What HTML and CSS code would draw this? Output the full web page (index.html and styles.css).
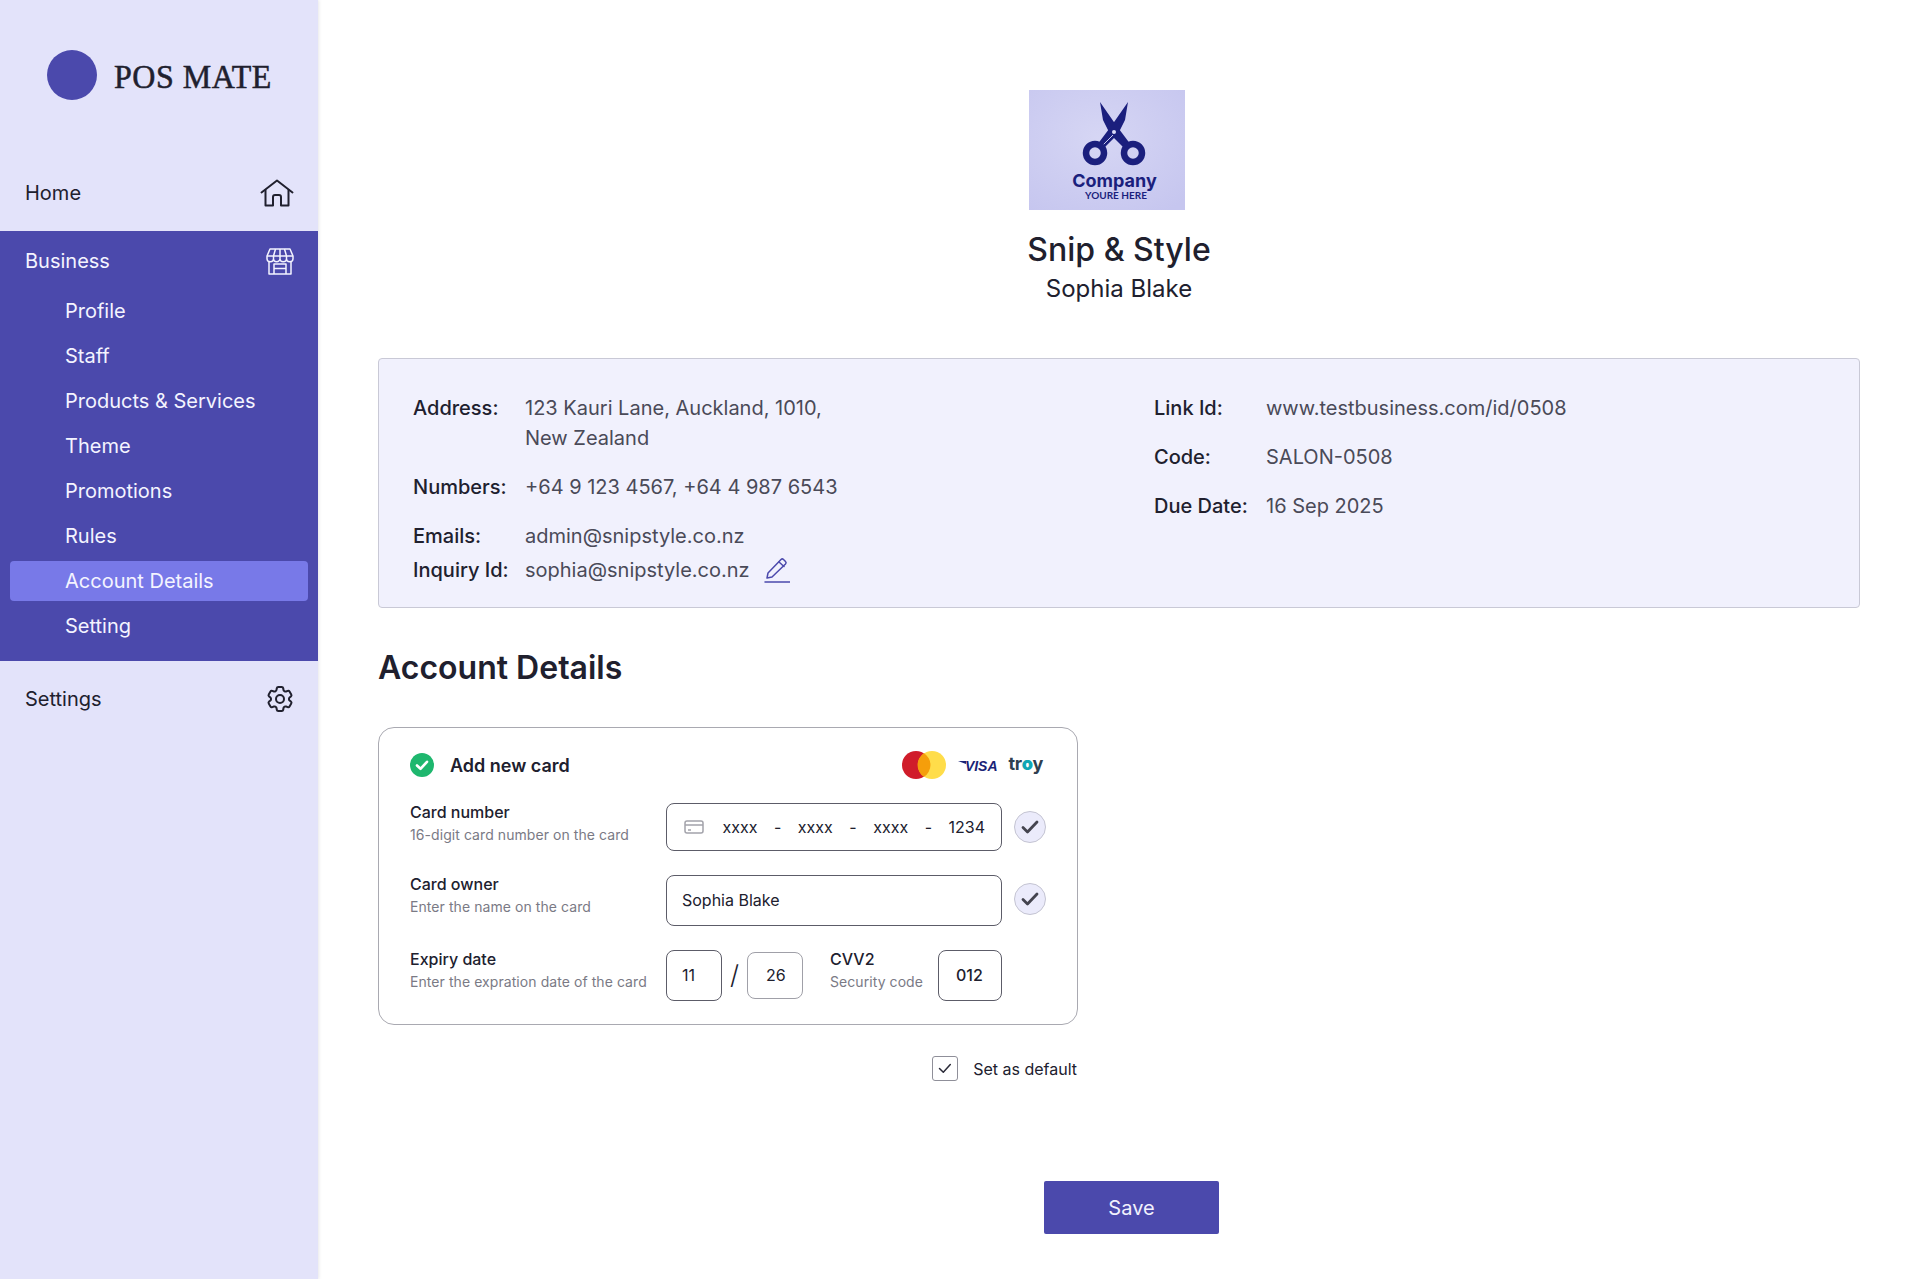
FILE: index.html
```html
<!DOCTYPE html>
<html lang="en">

<head>
  <meta charset="UTF-8">
  <meta name="viewport" content="width=device-width, initial-scale=1.0">
  <title>POS Mate - Account Details</title>

  <link rel="stylesheet" href="styles.css">
</head>

<body>
  <div class="app">
    <aside class="sidebar">
      <div class="brand">
        <span class="brand-dot"></span>
        <span class="brand-name">POS MATE</span>
      </div>

      <nav>
        <a class="nav-row">
          <span>Home</span>
          <svg class="nav-icon" width="34" height="28" viewBox="0 0 34 28" fill="none" stroke="currentColor" stroke-width="2" stroke-linejoin="round" stroke-linecap="round">
            <path d="M1.5 13.5 17 1.5l15.500 12" />
            <path d="M5.500 11v15.500h7.500v-8.500a2 2 0 0 1 2-2h4a2 2 0 0 1 2 2v8.500h7.500V11" />
          </svg>
        </a>

        <div class="nav-group">
          <a class="nav-row nav-row-group">
            <span>Business</span>
            <svg class="nav-icon" width="28" height="27" viewBox="0 0 28 27" fill="none" stroke="currentColor" stroke-width="1.500" stroke-linejoin="round">
              <path d="M4 1h20l3 7v2.500a3.200 3.200 0 0 1-6.500 0 3.200 3.200 0 0 1-6.500 0 3.200 3.200 0 0 1-6.500 0 3.200 3.200 0 0 1-6.500 0V8z" />
              <path d="M1 8h26M7.500 10V8l2-7M14 10V1M20.500 10V8l-2-7" />
              <path d="M3 13v13h22V13" />
              <path d="M8 26V16h12v10M8 20.500h12" />
            </svg>
          </a>
          <a class="sub-item">Profile</a>
          <a class="sub-item">Staff</a>
          <a class="sub-item">Products &amp; Services</a>
          <a class="sub-item">Theme</a>
          <a class="sub-item">Promotions</a>
          <a class="sub-item">Rules</a>
          <a class="sub-item sub-item-active">Account Details</a>
          <a class="sub-item">Setting</a>
        </div>

        <a class="nav-row">
          <span>Settings</span>
          <svg class="nav-icon nav-icon-gear" width="32" height="32" viewBox="0 0 24 24" fill="none" stroke="currentColor" stroke-width="1.500" stroke-linejoin="round" stroke-linecap="round">
            <path d="M9.594 3.940c.09-.542.56-.94 1.110-.94h2.593c.55 0 1.020.398 1.110.94l.213 1.281c.063.374.313.686.645.870.074.04.147.083.22.127.325.196.72.257 1.075.124l1.217-.456a1.125 1.125 0 0 1 1.370.49l1.296 2.247a1.125 1.125 0 0 1-.26 1.431l-1.003.827c-.293.241-.438.613-.43.992a7.723 7.723 0 0 1 0 .255c-.008.378.137.75.43.991l1.004.827c.424.35.534.955.26 1.430l-1.298 2.247a1.125 1.125 0 0 1-1.369.491l-1.217-.456c-.355-.133-.75-.072-1.076.124a6.470 6.470 0 0 1-.22.128c-.331.183-.581.495-.644.869l-.213 1.281c-.09.543-.56.94-1.110.94h-2.594c-.55 0-1.019-.398-1.110-.94l-.213-1.281c-.062-.374-.312-.686-.644-.87a6.520 6.520 0 0 1-.22-.127c-.325-.196-.72-.257-1.076-.124l-1.217.456a1.125 1.125 0 0 1-1.369-.49l-1.297-2.247a1.125 1.125 0 0 1 .26-1.431l1.004-.827c.292-.24.437-.613.43-.991a6.932 6.932 0 0 1 0-.255c.007-.38-.138-.751-.43-.992l-1.004-.827a1.125 1.125 0 0 1-.26-1.430l1.297-2.247a1.125 1.125 0 0 1 1.370-.491l1.216.456c.356.133.751.072 1.076-.124.072-.044.146-.086.22-.128.332-.183.582-.495.644-.869l.214-1.280Z" />
            <path d="M15 12a3 3 0 1 1-6 0 3 3 0 0 1 6 0Z" />
          </svg>
        </a>
      </nav>
    </aside>

    <main>
      <header class="business-head">
        <svg class="company-logo" width="156" height="120" viewBox="0 0 156 120">
          <defs>
            <radialGradient id="logo-bg" cx="45%" cy="40%" r="75%">
              <stop offset="0" stop-color="#d6d6f4" />
              <stop offset="1" stop-color="#c6c6ef" />
            </radialGradient>
          </defs>
          <rect width="156" height="120" fill="url(#logo-bg)" />
          <g fill="#1b1f7d">
            <path d="M71 12 87 35l15 20-5 5-16-16-7-14z" />
            <path d="M99 12 83 35 68 55l5 5 16-16 7-14z" />
          </g>
          <path d="M84 45 72 57" stroke="#c9c9f0" stroke-width="1" />
          <circle cx="85" cy="42" r="2" fill="#dcdcf7" />
          <g fill="none" stroke="#1b1f7d" stroke-width="6.500">
            <circle cx="66" cy="63" r="9" />
            <circle cx="104" cy="63" r="9" />
          </g>
          <text class="logo-company" x="85.500" y="97" text-anchor="middle">Company</text>
          <text class="logo-tag" x="87" y="109" text-anchor="middle">YOURE HERE</text>
        </svg>
        <h1>Snip &amp; Style</h1>
        <p class="owner">Sophia Blake</p>
      </header>

      <section class="info-panel">
        <dl class="info-col">
          <div class="info-row">
            <dt>Address:</dt>
            <dd>123 Kauri Lane, Auckland, 1010,<br>New Zealand</dd>
          </div>
          <div class="info-row">
            <dt>Numbers:</dt>
            <dd>+64 9 123 4567, +64 4 987 6543</dd>
          </div>
          <div class="info-row">
            <dt>Emails:</dt>
            <dd>admin@snipstyle.co.nz</dd>
          </div>
          <div class="info-row info-row-tight">
            <dt>Inquiry Id:</dt>
            <dd class="with-icon">
              sophia@snipstyle.co.nz
              <svg width="26" height="26" viewBox="0 0 26 26" fill="none" stroke="#4b49ac" stroke-width="1.500" stroke-linejoin="round" stroke-linecap="round">
                <path d="M1 25h25" />
                <path d="M3 21l1-5L17 2.500a1.800 1.800 0 0 1 2.500 0l2 2a1.800 1.800 0 0 1 0 2.500L8 20z" />
                <path d="M15 5l5 4.500" />
              </svg>
            </dd>
          </div>
        </dl>
        <dl class="info-col">
          <div class="info-row">
            <dt>Link Id:</dt>
            <dd>www.testbusiness.com/id/0508</dd>
          </div>
          <div class="info-row">
            <dt>Code:</dt>
            <dd>SALON-0508</dd>
          </div>
          <div class="info-row">
            <dt>Due Date:</dt>
            <dd>16 Sep 2025</dd>
          </div>
        </dl>
      </section>

      <h2>Account Details</h2>

      <form class="card-form">
        <div class="card-head">
          <div class="card-title">
            <svg width="24" height="24" viewBox="0 0 24 24">
              <circle cx="12" cy="12" r="12" fill="#1eb76e" />
              <path d="M7 12.500l3.500 3.300L17 8.800" fill="none" stroke="#fff" stroke-width="2.600" stroke-linecap="round" stroke-linejoin="round" />
            </svg>
            <span>Add new card</span>
          </div>
          <div class="brands">
            <svg class="mastercard" width="44" height="28" viewBox="0 0 44 28">
              <circle cx="14" cy="14" r="14" fill="#d01c2a" />
              <circle cx="30" cy="14" r="14" fill="#ffdd4a" />
              <path d="M22 2.200a14 14 0 0 1 0 23.600 14 14 0 0 1 0-23.600z" fill="#f59e0b" />
            </svg>
            <span class="visa"><i class="visa-wing"></i>VISA</span>
            <span class="troy">tr<b>o</b>y</span>
          </div>
        </div>

        <div class="form-row">
          <div class="field-text">
            <label>Card number</label>
            <small>16-digit card number on the card</small>
          </div>
          <div class="input input-number">
            <svg width="20" height="14" viewBox="0 0 20 14" fill="none" stroke="#a3a3ab" stroke-width="1.500">
              <rect x="1" y="1" width="18" height="12" rx="2" />
              <path d="M1 5h18M4 10h3" />
            </svg>
            <span>xxxx</span><span>-</span><span>xxxx</span><span>-</span><span>xxxx</span><span>-</span><span>1234</span>
          </div>
          <span class="ok-badge">
            <svg width="18" height="14" viewBox="0 0 18 14"><path d="M2 7.500l4.500 4.500L16 2" fill="none" stroke="#44444f" stroke-width="2.800" stroke-linecap="round" stroke-linejoin="round" /></svg>
          </span>
        </div>

        <div class="form-row">
          <div class="field-text">
            <label>Card owner</label>
            <small>Enter the name on the card</small>
          </div>
          <div class="input input-owner">Sophia Blake</div>
          <span class="ok-badge">
            <svg width="18" height="14" viewBox="0 0 18 14"><path d="M2 7.500l4.500 4.500L16 2" fill="none" stroke="#44444f" stroke-width="2.800" stroke-linecap="round" stroke-linejoin="round" /></svg>
          </span>
        </div>

        <div class="form-row">
          <div class="field-text">
            <label>Expiry date</label>
            <small>Enter the expration date of the card</small>
          </div>
          <div class="input input-month">11</div>
          <span class="date-slash">/</span>
          <div class="input input-year">26</div>
          <div class="field-text field-cvv">
            <label>CVV2</label>
            <small>Security code</small>
          </div>
          <div class="input input-cvv">012</div>
        </div>
      </form>

      <div class="default-row">
        <span class="check-box">
          <svg width="14" height="11" viewBox="0 0 14 11"><path d="M1.500 5.500l3.800 3.800 7-7.800" fill="none" stroke="#2a2a38" stroke-width="1.500" stroke-linecap="round" stroke-linejoin="round" /></svg>
        </span>
        <span>Set as default</span>
      </div>

      <button class="save-btn">Save</button>
    </main>
  </div>
</body>

</html>
```

FILE: styles.css
```css
* {
  box-sizing: border-box;
}

body {
  color: #20202e;
  font-family: Inter, "Noto Sans", sans-serif;
  margin: 0;
}

.app {
  display: flex;
  min-height: 1279px;
}

/* sidebar */
.sidebar {
  background: #e3e3fa;
  box-shadow: 1px 0 3px rgba(60, 60, 90, 0.12);
  flex: 0 0 318px;
}

.brand {
  align-items: center;
  display: flex;
  gap: 17px;
  height: 155px;
  padding: 0 0 5px 47px;
}

.brand-dot {
  background: #4b49ac;
  border-radius: 50%;
  height: 50px;
  width: 50px;
}

.brand-name {
  -webkit-text-stroke: 0.5px #20202e;
  font-family: "Liberation Serif", serif;
  font-size: 32px;
  font-weight: 400;
  letter-spacing: 0.5px;
  margin-top: 3px;
  transform: scaleY(1.08);
}

.nav-row {
  align-items: center;
  display: flex;
  font-size: 20px;
  height: 76px;
  justify-content: space-between;
  padding: 0 24px 0 25px;
}

.nav-icon-gear {
  margin-right: -2px;
}

.nav-group {
  background: #4b49ac;
  color: #f4f4ff;
  padding-bottom: 15px;
}

.nav-row-group {
  height: 60px;
}

.sub-item {
  align-items: center;
  border-radius: 4px;
  display: flex;
  font-size: 20px;
  height: 40px;
  margin: 0 10px 5px;
  padding-left: 55px;
}

.sub-item:last-child {
  margin-bottom: 0;
}

.sub-item-active {
  background: #7879e8;
}

/* main column */
main {
  flex: 1;
  padding: 90px 60px 0;
}

.business-head {
  align-items: center;
  display: flex;
  flex-direction: column;
}

.company-logo {
  margin-right: 24px;
}

.logo-company {
  fill: #1b1f7d;
  font-family: Inter, sans-serif;
  font-size: 18px;
  font-weight: 700;
}

.logo-tag {
  fill: #1b1f7d;
  font-family: Lato, sans-serif;
  font-size: 10px;
  font-weight: 700;
}

h1 {
  font-size: 32px;
  font-weight: 500;
  line-height: 40px;
  margin: 20px 0 0;
}

.owner {
  font-size: 24px;
  line-height: 30px;
  margin: 4px 0 0;
}

.info-panel {
  background: #f1f1fd;
  border: 1px solid #c9c9d6;
  border-radius: 4px;
  display: grid;
  font-size: 20px;
  grid-template-columns: 741px 1fr;
  height: 250px;
  line-height: 30px;
  margin-top: 54px;
  padding: 34px 34px 0;
}

.info-col {
  display: flex;
  flex-direction: column;
  gap: 19px;
  margin: 0;
}

.info-row {
  display: flex;
}

.info-row-tight {
  margin-top: -15px;
}

.info-row dt {
  flex: 0 0 112px;
  font-weight: 500;
}

.info-row dd {
  color: #4a4a58;
  margin: 0;
}

.with-icon {
  align-items: center;
  display: flex;
  gap: 14px;
}

h2 {
  font-size: 32px;
  font-weight: 600;
  line-height: 40px;
  margin: 40px 0 0;
}

/* card form */
.card-form {
  border: 1px solid #a9a9b1;
  border-radius: 16px;
  height: 298px;
  margin-top: 39px;
  padding: 25px 0 0 31px;
  width: 700px;
}

.card-head {
  align-items: center;
  display: flex;
  height: 24px;
  justify-content: space-between;
  margin-bottom: 24px;
  padding-right: 34px;
}

.card-title {
  align-items: center;
  display: flex;
  font-size: 18px;
  font-weight: 600;
  gap: 16px;
}

.brands {
  align-items: center;
  display: flex;
  gap: 11px;
}

.mastercard {
  margin-right: 1px;
}

.visa {
  align-items: center;
  color: #1a2376;
  display: flex;
  font-family: "Liberation Sans", sans-serif;
  font-size: 14px;
  font-style: italic;
  font-weight: 700;
  margin-top: 1px;
}

.visa-wing {
  border-left: 8px solid transparent;
  border-top: 3px solid #1a2376;
  margin: 0 -1px 7px 0;
}

.troy {
  color: #2f4050;
  font-size: 18px;
  font-weight: 700;
  letter-spacing: -0.4px;
  line-height: 18px;
  margin-top: -3px;
}

.troy b {
  color: #10a7b5;
}

.form-row {
  display: flex;
  margin-bottom: 22px;
}

.field-text {
  flex: 0 0 256px;
}

.field-text label {
  display: block;
  font-size: 16px;
  font-weight: 500;
  line-height: 22px;
}

.field-text small {
  color: #7a7a85;
  display: block;
  font-size: 14px;
  letter-spacing: 0.07px;
  line-height: 20px;
  margin-top: 2px;
}

.input {
  align-items: center;
  border: 1px solid #5c5c68;
  border-radius: 8px;
  display: flex;
  font-size: 16px;
  height: 51px;
  margin-top: 2px;
  padding: 0 15px 2px;
}

.input-number {
  height: 48px;
  justify-content: space-between;
  padding: 0 16px 1px 17px;
  width: 336px;
}

.input-number svg {
  margin-right: 2px;
}

.input-owner {
  width: 336px;
}

.input-month {
  width: 56px;
}

.input-year {
  border-color: #a0a0a8;
  height: 47px;
  margin-top: 4px;
  padding-left: 18px;
  width: 56px;
}

.input-cvv {
  font-weight: 500;
  padding-left: 17px;
  width: 64px;
}

.date-slash {
  font-size: 26px;
  font-weight: 300;
  line-height: 51px;
  margin-top: 1px;
  text-align: center;
  width: 25px;
}

.field-cvv {
  flex: 0 0 108px;
  margin-left: 27px;
}

.ok-badge {
  align-items: center;
  background: #ebebfb;
  border: 1px solid #c4c4d2;
  border-radius: 50%;
  display: flex;
  height: 32px;
  justify-content: center;
  margin: 10px 0 0 12px;
  width: 32px;
}

.default-row {
  align-items: center;
  display: flex;
  font-size: 16px;
  gap: 15px;
  justify-content: flex-end;
  margin-top: 31px;
  width: 699px;
}

.check-box {
  align-items: center;
  border: 1px solid #8f8f99;
  border-radius: 3px;
  display: flex;
  height: 25px;
  justify-content: center;
  width: 26px;
}

.save-btn {
  background: #4b49ac;
  border: 0;
  border-radius: 2px;
  color: #f1f1fd;
  display: block;
  font-family: inherit;
  font-size: 20px;
  height: 53px;
  margin: 100px 0 0 666px;
  width: 175px;
}
```
